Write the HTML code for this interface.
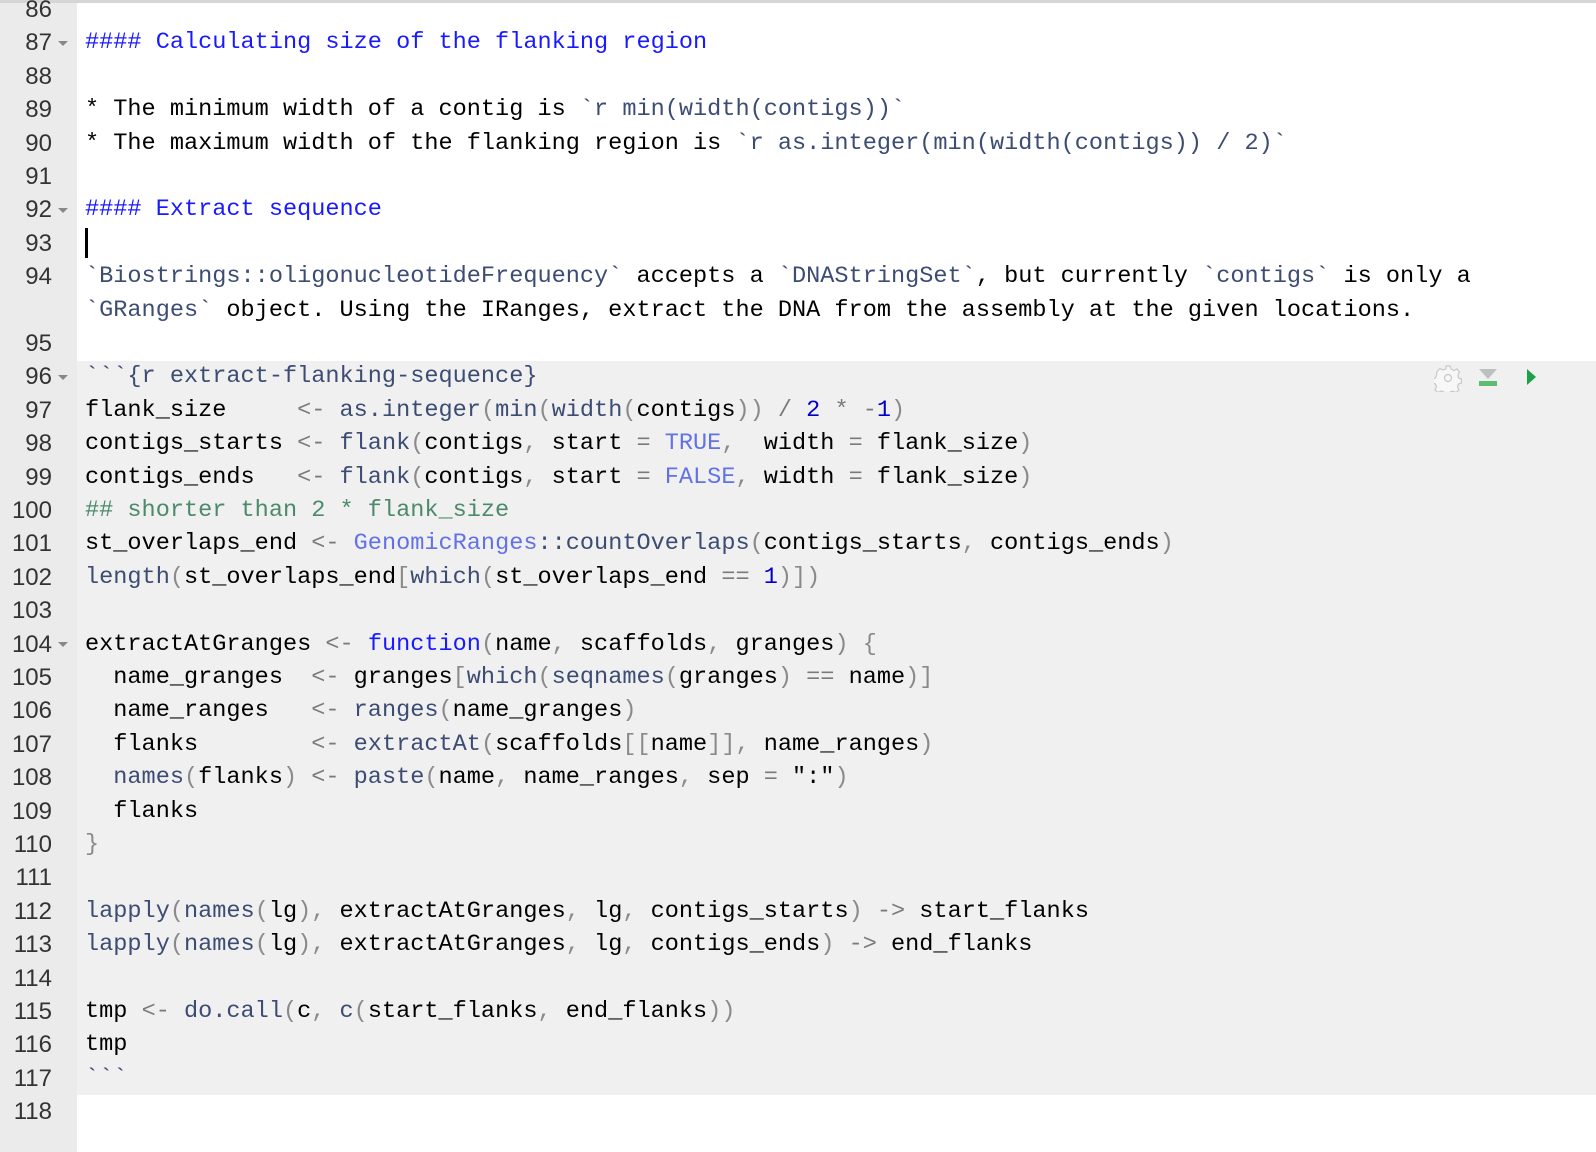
<!DOCTYPE html>
<html><head><meta charset="utf-8"><style>
html,body{margin:0;padding:0;width:1596px;height:1152px;overflow:hidden;background:#fff;}
body{position:relative;font-family:"Liberation Mono",monospace;}
#top{position:absolute;left:0;top:0;width:1596px;height:3px;background:#d6d6d6;}
#gut{position:absolute;left:0;top:3px;width:77px;height:1149px;background:#ebebeb;}
#chunk{position:absolute;left:77px;top:361px;width:1519px;height:734px;background:#f0f0f0;}
.ln{position:absolute;left:0;width:52px;text-align:right;font-family:"Liberation Sans","DejaVu Sans",sans-serif;font-size:24px;color:#333;line-height:33.4px;height:33.4px;}
.fd{position:absolute;left:58px;width:0;height:0;border-left:5px solid transparent;border-right:5px solid transparent;border-top:5px solid #888;}
.c{position:absolute;left:85px;white-space:pre;font-size:23.57px;line-height:33.4px;height:33.4px;color:#000;}
.h{color:#1a1aff}.f{color:#3c4c72}.p{color:#8a8a8a}.o{color:#7a7a7a}.n{color:#0000cd}.k{color:#6272e6}.cm{color:#4b8a6a}.kw{color:#1a1aff}.ic{color:#3c4c72}
#cur{position:absolute;left:85px;top:228px;width:3px;height:30px;background:#000;}
</style></head><body>
<div id="top"></div><div id="gut"></div><div id="chunk"></div><div id="cur"></div>

<div class="ln" style="top:-7px">86</div>
<div class="ln" style="top:26.4px">87</div><div class="fd" style="top:41px"></div>
<div class="ln" style="top:59.8px">88</div>
<div class="ln" style="top:93.2px">89</div>
<div class="ln" style="top:126.6px">90</div>
<div class="ln" style="top:160px">91</div>
<div class="ln" style="top:193.4px">92</div><div class="fd" style="top:208px"></div>
<div class="ln" style="top:226.8px">93</div>
<div class="ln" style="top:260.2px">94</div>
<div class="ln" style="top:327px">95</div>
<div class="ln" style="top:360.4px">96</div><div class="fd" style="top:375px"></div>
<div class="ln" style="top:393.8px">97</div>
<div class="ln" style="top:427.2px">98</div>
<div class="ln" style="top:460.6px">99</div>
<div class="ln" style="top:494px">100</div>
<div class="ln" style="top:527.4px">101</div>
<div class="ln" style="top:560.8px">102</div>
<div class="ln" style="top:594.2px">103</div>
<div class="ln" style="top:627.6px">104</div><div class="fd" style="top:642px"></div>
<div class="ln" style="top:661px">105</div>
<div class="ln" style="top:694.4px">106</div>
<div class="ln" style="top:727.8px">107</div>
<div class="ln" style="top:761.2px">108</div>
<div class="ln" style="top:794.6px">109</div>
<div class="ln" style="top:828px">110</div>
<div class="ln" style="top:861.4px">111</div>
<div class="ln" style="top:894.8px">112</div>
<div class="ln" style="top:928.2px">113</div>
<div class="ln" style="top:961.6px">114</div>
<div class="ln" style="top:995px">115</div>
<div class="ln" style="top:1028.4px">116</div>
<div class="ln" style="top:1061.8px">117</div>
<div class="ln" style="top:1095.2px">118</div>

<div class="c h" style="top:26.4px">#### Calculating size of the flanking region</div>
<div class="c" style="top:93.2px">* The minimum width of a contig is <span class="ic">&#96;r min(width(contigs))&#96;</span></div>
<div class="c" style="top:126.6px">* The maximum width of the flanking region is <span class="ic">&#96;r as.integer(min(width(contigs)) / 2)&#96;</span></div>
<div class="c h" style="top:193.4px">#### Extract sequence</div>
<div class="c" style="top:260.2px"><span class="ic">&#96;Biostrings::oligonucleotideFrequency&#96;</span> accepts a <span class="ic">&#96;DNAStringSet&#96;</span>, but currently <span class="ic">&#96;contigs&#96;</span> is only a</div>
<div class="c" style="top:293.6px"><span class="ic">&#96;GRanges&#96;</span> object. Using the IRanges, extract the DNA from the assembly at the given locations.</div>
<div class="c f" style="top:360.4px">&#96;&#96;&#96;{r extract-flanking-sequence}</div>
<div class="c" style="top:393.8px">flank_size     <span class="o">&lt;-</span> <span class="f">as.integer</span><span class="p">(</span><span class="f">min</span><span class="p">(</span><span class="f">width</span><span class="p">(</span>contigs<span class="p">))</span> <span class="o">/</span> <span class="n">2</span> <span class="o">*</span> <span class="o">-</span><span class="n">1</span><span class="p">)</span></div>
<div class="c" style="top:427.2px">contigs_starts <span class="o">&lt;-</span> <span class="f">flank</span><span class="p">(</span>contigs<span class="p">,</span> start <span class="o">=</span> <span class="k">TRUE</span><span class="p">,</span>  width <span class="o">=</span> flank_size<span class="p">)</span></div>
<div class="c" style="top:460.6px">contigs_ends   <span class="o">&lt;-</span> <span class="f">flank</span><span class="p">(</span>contigs<span class="p">,</span> start <span class="o">=</span> <span class="k">FALSE</span><span class="p">,</span> width <span class="o">=</span> flank_size<span class="p">)</span></div>
<div class="c cm" style="top:494px">## shorter than 2 * flank_size</div>
<div class="c" style="top:527.4px">st_overlaps_end <span class="o">&lt;-</span> <span class="k">GenomicRanges</span><span class="f">::countOverlaps</span><span class="p">(</span>contigs_starts<span class="p">,</span> contigs_ends<span class="p">)</span></div>
<div class="c" style="top:560.8px"><span class="f">length</span><span class="p">(</span>st_overlaps_end<span class="p">[</span><span class="f">which</span><span class="p">(</span>st_overlaps_end <span class="o">==</span> <span class="n">1</span><span class="p">)])</span></div>
<div class="c" style="top:627.6px">extractAtGranges <span class="o">&lt;-</span> <span class="kw">function</span><span class="p">(</span>name<span class="p">,</span> scaffolds<span class="p">,</span> granges<span class="p">)</span> <span class="p">{</span></div>
<div class="c" style="top:661px">  name_granges  <span class="o">&lt;-</span> granges<span class="p">[</span><span class="f">which</span><span class="p">(</span><span class="f">seqnames</span><span class="p">(</span>granges<span class="p">)</span> <span class="o">==</span> name<span class="p">)]</span></div>
<div class="c" style="top:694.4px">  name_ranges   <span class="o">&lt;-</span> <span class="f">ranges</span><span class="p">(</span>name_granges<span class="p">)</span></div>
<div class="c" style="top:727.8px">  flanks        <span class="o">&lt;-</span> <span class="f">extractAt</span><span class="p">(</span>scaffolds<span class="p">[[</span>name<span class="p">]],</span> name_ranges<span class="p">)</span></div>
<div class="c" style="top:761.2px">  <span class="f">names</span><span class="p">(</span>flanks<span class="p">)</span> <span class="o">&lt;-</span> <span class="f">paste</span><span class="p">(</span>name<span class="p">,</span> name_ranges<span class="p">,</span> sep <span class="o">=</span> ":"<span class="p">)</span></div>
<div class="c" style="top:794.6px">  flanks</div>
<div class="c p" style="top:828px">}</div>
<div class="c" style="top:894.8px"><span class="f">lapply</span><span class="p">(</span><span class="f">names</span><span class="p">(</span>lg<span class="p">),</span> extractAtGranges<span class="p">,</span> lg<span class="p">,</span> contigs_starts<span class="p">)</span> <span class="o">-&gt;</span> start_flanks</div>
<div class="c" style="top:928.2px"><span class="f">lapply</span><span class="p">(</span><span class="f">names</span><span class="p">(</span>lg<span class="p">),</span> extractAtGranges<span class="p">,</span> lg<span class="p">,</span> contigs_ends<span class="p">)</span> <span class="o">-&gt;</span> end_flanks</div>
<div class="c" style="top:995px">tmp <span class="o">&lt;-</span> <span class="f">do.call</span><span class="p">(</span>c<span class="p">,</span> <span class="f">c</span><span class="p">(</span>start_flanks<span class="p">,</span> end_flanks<span class="p">))</span></div>
<div class="c" style="top:1028.4px">tmp</div>
<div class="c f" style="top:1061.8px">&#96;&#96;&#96;</div>

<svg style="position:absolute;left:1434px;top:364px" width="28" height="28" viewBox="0 0 28 28">
<path d="M12 2h4l1 3 3 1.5 3-1.5 2.5 3-1.5 3 .5 3 3 1v4l-3 1-1 3 1.5 3-3 2.5-3-1.5-3 1-1 3h-4l-1-3-3-1-3 1.5-3-2.5 1.5-3-1-3-3-1v-4l3-1 1-3L3 7.5l3-3 3 1.5 3-1z" fill="#f7f7f7" stroke="#c8c8c8" stroke-width="1.2"/>
<circle cx="14" cy="14" r="3.5" fill="none" stroke="#c8c8c8" stroke-width="1.2"/></svg>
<div style="position:absolute;left:1479px;top:369px;width:0;height:0;border-left:9px solid transparent;border-right:9px solid transparent;border-top:10px solid #bdbfc0;"></div>
<div style="position:absolute;left:1479px;top:381px;width:18px;height:5px;background:#5dbd75;"></div>
<div style="position:absolute;left:1527px;top:369px;width:0;height:0;border-top:8px solid transparent;border-bottom:8px solid transparent;border-left:9px solid #1ea04a;"></div>
</body></html>
